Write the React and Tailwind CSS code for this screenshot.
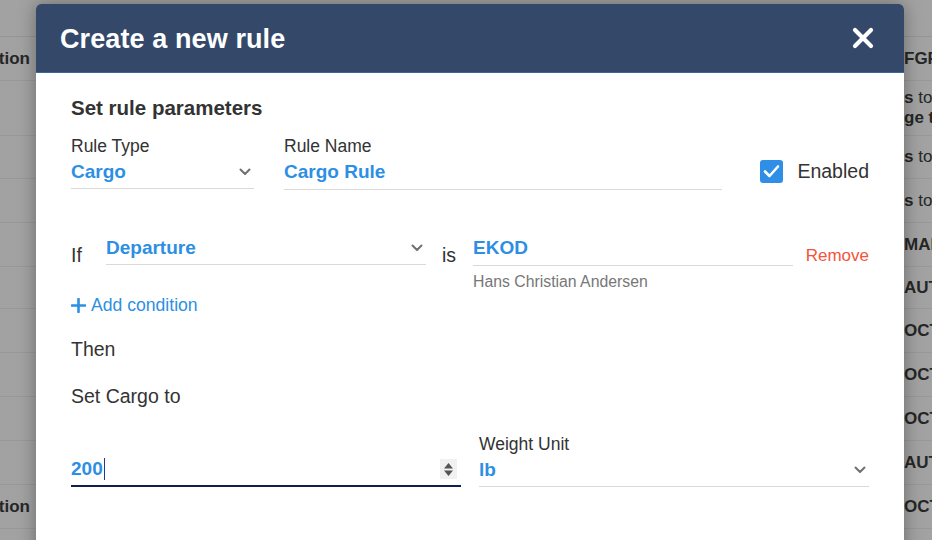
import React from 'react';

const rows = [
  { h: 'h-[44px]', left: 'tion', right: ['FGF'], bold: true },
  { h: 'h-[55px]', left: '', right: ['s to', 'ge t'] },
  { h: 'h-[43px]', left: '', right: ['s to'] },
  { h: 'h-[44px]', left: '', right: ['s to'] },
  { h: 'h-[44px]', left: '', right: ['MAI'] },
  { h: 'h-[42px]', left: '', right: ['AUT'] },
  { h: 'h-[44px]', left: '', right: ['OCT'] },
  { h: 'h-[44px]', left: '', right: ['OCT'] },
  { h: 'h-[44px]', left: '', right: ['OCT'] },
  { h: 'h-[44px]', left: '', right: ['AUT'] },
  { h: 'h-[44px]', left: 'ation', right: ['OCT'] },
  { h: 'h-[44px]', left: '', right: [''] },
];

function Chevron() {
  return (
    <svg width="12" height="8" viewBox="0 0 12 8" className="shrink-0">
      <polyline points="1.5,1.5 6,6 10.5,1.5" fill="none" stroke="#707070" strokeWidth="2" strokeLinecap="round" strokeLinejoin="round" />
    </svg>
  );
}

function SelectField({ label, value, width }) {
  return (
    <div className={width}>
      {label && <div className="text-[17.5px] leading-[20px] text-[#333] mb-[4px]">{label}</div>}
      <div className="flex items-center justify-between border-b border-[#d9d9d9] pb-[4px] pr-[3px]">
        <span className="text-[19px] leading-[24px] font-bold text-[#2d8fe3]">{value}</span>
        <Chevron />
      </div>
    </div>
  );
}

export default function App() {
  return (
    <div className="relative h-[540px] w-[932px] overflow-hidden bg-[#a2a2a2] font-['Liberation_Sans',Arial,sans-serif]">
      {/* tableau en arrière-plan */}
      <div className="pt-[36px]">
        <div className="border-t border-[#959595]" />
        {rows.map((r, i) => (
          <div key={i} className={`${r.h} flex border-b border-[#989898] text-[17px] text-[#262626]`}>
            <div className="w-[36px] overflow-hidden whitespace-nowrap flex items-center justify-end pr-[6px] font-bold">
              {r.left}
            </div>
            <div className="flex-1" />
            <div className="w-[28px] overflow-hidden whitespace-nowrap flex flex-col justify-center leading-[20px]">
              {r.right.map((t, j) => (
                <span key={j} className={t.startsWith('s ') ? '' : 'font-bold'}>
                  {t.startsWith('s ') ? (<><b>s</b> to</>) : t}
                </span>
              ))}
            </div>
          </div>
        ))}
      </div>

      {/* modale */}
      <div className="absolute left-[36px] top-[4px] w-[868px] h-[600px] bg-white rounded-t-[5px] shadow-[0_0_18px_rgba(0,0,0,0.35)]">
        <div className="h-[69px] bg-[#34496a] rounded-t-[5px] border-b border-[#3567a5] flex items-center justify-between pl-[24px] pr-[30px]">
          <h2 className="mt-[2px] text-[27px] font-bold text-white tracking-[0.1px]">Create a new rule</h2>
          <svg width="22" height="22" viewBox="0 0 22 22">
            <path d="M3 3 L19 19 M19 3 L3 19" stroke="white" strokeWidth="4.2" strokeLinecap="round" />
          </svg>
        </div>

        <div className="px-[35px] pt-[23px]">
          <div className="text-[20.5px] leading-[24px] font-bold text-[#333]">Set rule parameters</div>

          <div className="mt-[16px] flex items-start">
            <SelectField label="Rule Type" value="Cargo" width="w-[183px]" />
            <div className="ml-[30px] w-[438px]">
              <div className="text-[17.5px] leading-[20px] text-[#333] mb-[4px]">Rule Name</div>
              <div className="border-b border-[#d9d9d9] pb-[4px]">
                <span className="text-[19px] leading-[24px] font-bold text-[#2d8fe3]">Cargo Rule</span>
              </div>
            </div>
            <div className="ml-auto mt-[23px] flex items-center gap-[14px]">
              <div className="w-[23px] h-[23px] rounded-[3px] bg-[#2f8fe6] flex items-center justify-center">
                <svg width="17" height="14" viewBox="0 0 17 14">
                  <polyline points="2,7.5 6.5,12 15,2.5" fill="none" stroke="white" strokeWidth="2.6" strokeLinecap="round" strokeLinejoin="round" />
                </svg>
              </div>
              <span className="text-[19.5px] leading-[24px] text-[#333]">Enabled</span>
            </div>
          </div>

          <div className="mt-[46px] flex items-start">
            <span className="w-[35px] mt-[7px] text-[19.5px] leading-[24px] text-[#333]">If</span>
            <SelectField value="Departure" width="w-[320px]" />
            <span className="ml-[16px] w-[31px] mt-[7px] text-[19.5px] leading-[24px] text-[#333]">is</span>
            <div className="w-[320px]">
              <div className="border-b border-[#d9d9d9] pb-[4px]">
                <span className="text-[19px] leading-[24px] font-bold text-[#2d8fe3]">EKOD</span>
              </div>
              <div className="mt-[7px] text-[15.8px] leading-[18px] text-[#777]">Hans Christian Andersen</div>
            </div>
            <span className="ml-auto mt-[9px] text-[17px] leading-[22px] text-[#f4533c]">Remove</span>
          </div>

          <div className="mt-[3px] flex items-center gap-[5px] text-[#2d8fe3]">
            <svg width="15" height="15" viewBox="0 0 15 15">
              <path d="M7.5 1 V14 M1 7.5 H14" stroke="#2d8fe3" strokeWidth="2.6" strokeLinecap="round" />
            </svg>
            <span className="text-[17.6px] leading-[22px]">Add condition</span>
          </div>

          <div className="mt-[21px] text-[19.5px] leading-[24px] text-[#333]">Then</div>
          <div className="mt-[23px] text-[19.5px] leading-[24px] text-[#333]">Set Cargo to</div>

          <div className="mt-[26px] flex items-end gap-[18px]">
            <div className="w-[390px] flex items-center justify-between border-b-2 border-[#0f1f4f] pb-[4px] pr-[4px]">
              <span className="flex items-center text-[19px] leading-[24px] font-bold text-[#2d8fe3]">
                200<span className="ml-[1px] w-[1.5px] h-[22px] bg-[#1f3b8f]" />
              </span>
              <span className="w-[17px] h-[20px] bg-[#f1f1f1] flex items-center justify-center">
                <svg width="11" height="15" viewBox="0 0 11 15">
                  <path d="M5.5 1 L10 6.5 H1 Z M5.5 14 L10 8.5 H1 Z" fill="#555" />
                </svg>
              </span>
            </div>
            <div className="w-[390px]">
              <SelectField label="Weight Unit" value="lb" width="w-full" />
            </div>
          </div>
        </div>
      </div>
    </div>
  );
}
